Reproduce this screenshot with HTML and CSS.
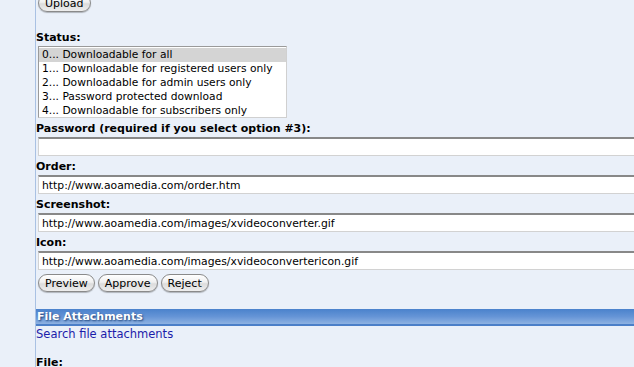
FILE: index.html
```html
<!doctype html>
<html lang="en">
  <head>
    <meta charset="UTF-8" />
    <title>Edit file</title>
    <link rel="stylesheet" href="styles.css">
  </head>
  <body>
    <div class="page">
      <div class="content">
        <button class="btn upload-btn">Upload</button>

        <div class="label status-label">Status:</div>
        <div class="listbox">
          <div class="option selected">0... Downloadable for all</div>
          <div class="option">1... Downloadable for registered users only</div>
          <div class="option">2... Downloadable for admin users only</div>
          <div class="option">3... Password protected download</div>
          <div class="option">4... Downloadable for subscribers only</div>
        </div>

        <div class="label">Password (required if you select option #3):</div>
        <input class="field" type="text" value="" />

        <div class="label">Order:</div>
        <input class="field" type="text" value="http://www.aoamedia.com/order.htm" />

        <div class="label">Screenshot:</div>
        <input class="field" type="text" value="http://www.aoamedia.com/images/xvideoconverter.gif" />

        <div class="label">Icon:</div>
        <input class="field" type="text" value="http://www.aoamedia.com/images/xvideoconvertericon.gif" />

        <div class="actions">
          <button class="btn">Preview</button>
          <button class="btn">Approve</button>
          <button class="btn">Reject</button>
        </div>

        <div class="section-bar">File Attachments</div>
        <a class="link" href="#">Search file attachments</a>

        <div class="label file-label">File:</div>
      </div>
    </div>
  </body>
</html>
```

FILE: styles.css
```css
* {
  margin: 0;
  padding: 0;
  box-sizing: border-box;
}

body {
  font-family: "DejaVu Sans", Verdana, sans-serif;
  font-size: 11px;
  color: #000000;
  background: #eaf0f9;
  overflow: hidden;
  height: 367px;
}

.page {
  margin-left: 35px;
  border-left: 1px solid #a9c1e3;
  min-height: 367px;
}

.content {
  display: flex;
  flex-direction: column;
  align-items: flex-start;
  margin-top: -6px;
}

.label {
  font-weight: bold;
  font-size: 11px;
  line-height: 14px;
  margin-top: 4px;
  margin-bottom: 1px;
}

.status-label {
  margin-top: 19px;
}

.listbox {
  margin-left: 2px;
  width: 249px;
  height: 72px;
  background: #ffffff;
  border: 1px solid #9a9a9a;
  border-right-color: #d0d0d0;
  border-bottom-color: #d0d0d0;
  overflow: hidden;
  padding-top: 1px;
}

.option {
  height: 14px;
  line-height: 14px;
  padding-left: 3px;
  white-space: nowrap;
  font-size: 10.7px;
}

.option.selected {
  background: #d4d4d4;
}

.field {
  margin-left: 2px;
  width: 640px;
  height: 19px;
  background: #ffffff;
  border: 1px solid #d2d2d2;
  border-top: 2px solid #888888;
  font-family: "DejaVu Sans", Verdana, sans-serif;
  font-size: 10.8px;
  padding: 0 3px;
  color: #000000;
  outline: none;
}

.actions {
  display: flex;
  gap: 3px;
  margin-top: 4px;
  margin-left: 2px;
}

.btn {
  font-family: "DejaVu Sans", Verdana, sans-serif;
  font-size: 11px;
  height: 18px;
  padding: 0 6px;
  border: 1px solid #8a8a8a;
  border-radius: 9px;
  background: linear-gradient(to bottom, #ffffff 0%, #f0f0f0 45%, #dcdcdc 55%, #eeeeee 100%);
  box-shadow: 0 1px 1px rgba(0, 0, 0, 0.25);
  color: #000000;
}

.upload-btn {
  margin-left: 2px;
}

.section-bar {
  align-self: stretch;
  margin-top: 17px;
  height: 17px;
  line-height: 15px;
  padding-left: 1px;
  color: #ffffff;
  font-weight: bold;
  font-size: 11px;
  text-shadow: 1px 1px 2px #1b3f75;
  background: linear-gradient(to bottom, #4a82cc 0%, #6594d6 50%, #8eb2e2 100%);
  border-bottom: 2px solid #4b7fc8;
}

.link {
  color: #1c1caa;
  text-decoration: none;
  font-size: 11.5px;
  line-height: 16px;
}

.file-label {
  margin-top: 14px;
}
```
